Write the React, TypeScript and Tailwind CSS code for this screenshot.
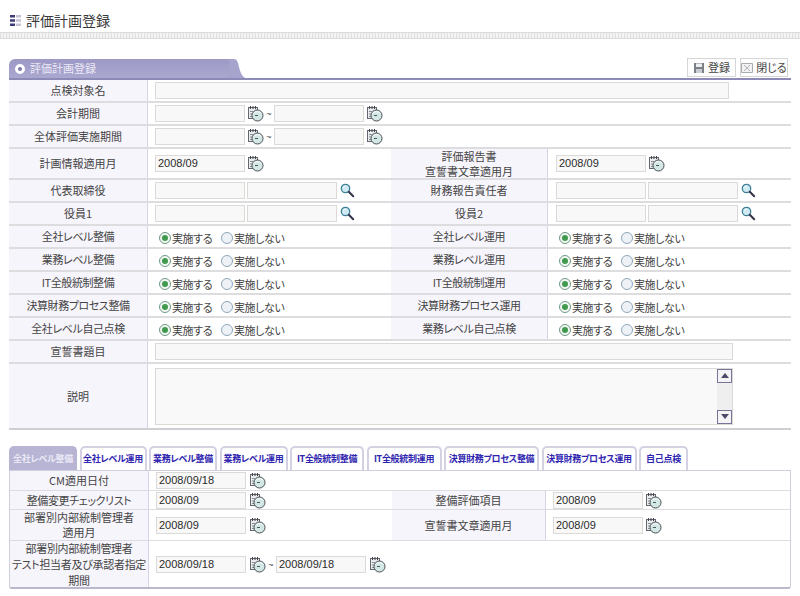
import React from "react";

const Cal = () => (
  <svg width="17" height="17" viewBox="0 0 17 17" className="shrink-0">
    <rect x="1.500" y="2.500" width="9" height="11" fill="#e8ecec" stroke="#66666e" strokeWidth="1" />
    <path d="M3.500 1v3M6 1v3M8.500 1v3" stroke="#44444c" strokeWidth="1" />
    <path d="M3 6.500h3M3 9h2M3 11.500h2" stroke="#8c8c98" strokeWidth="1" />
    <circle cx="10.500" cy="10.500" r="5.500" fill="#d3e8e4" stroke="#4a4e54" strokeWidth="1" />
    <path d="M8 10.500h3" stroke="#4a5a5a" strokeWidth="1" />
    <path d="M6.500 8.500c1.800-2.200 5.500-2.500 7.800-.3" stroke="#fff" strokeWidth="1" fill="none" />
  </svg>
);

const Search = () => (
  <svg width="15" height="15" viewBox="0 0 15 15" className="shrink-0">
    <circle cx="5.500" cy="5.500" r="4.200" fill="#cfeaf2" stroke="#3d7f96" strokeWidth="1.3" />
    <path d="M3.500 4.500c.5-1 1.200-1.400 2.200-1.500" stroke="#fff" strokeWidth="1" fill="none" />
    <path d="M8.800 8.800l4.400 4.400" stroke="#33334a" strokeWidth="2" strokeLinecap="round" />
  </svg>
);

const Input = ({ v = "", w = "w-[90px]" }: { v?: string; w?: string }) => (
  <div className={`${w} h-[17px] shrink-0 bg-[#f8f8f8] border border-[#dcdad6] px-[2px] text-[11px] leading-[15px] text-[#2a2a2a] font-['Liberation_Sans']`}>
    {v}
  </div>
);

const Radio = ({ on }: { on?: boolean }) => (
  <span className={`w-[12px] h-[12px] rounded-full border flex items-center justify-center shrink-0 ${on ? "border-[#6f9a86] bg-[#f2f7f4]" : "border-[#8ea6bb] bg-[#eef2f6]"}`}>
    {on && <span className="w-[6px] h-[6px] rounded-full bg-[#3f9a4f]" />}
  </span>
);

const Radios = () => (
  <div className="flex items-center pl-[11px] pt-[4px] text-[11px] text-[#444] tracking-[-0.4px]">
    <Radio on />
    <span className="ml-[1px] w-[49px]">実施する</span>
    <Radio />
    <span className="ml-[1px]">実施しない</span>
  </div>
);

const Label = ({ children, w, cls = "leading-[15px]" }: { children: React.ReactNode; w: string; cls?: string }) => (
  <div className={`${w} ${cls} shrink-0 h-full flex items-center justify-center text-center text-[11px] text-[#444] bg-[#f7f5fc] border-r border-[#d6d3e4]`}>
    <div>{children}</div>
  </div>
);

const Row = ({ h, children, line = "border-b-2 border-[#dddddf]" }: { h: string; children: React.ReactNode; line?: string }) => (
  <div className={`${h} ${line} box-border flex items-center`}>{children}</div>
);

const Cell = ({ children, cls = "pl-[7px] gap-[2px]" }: { children?: React.ReactNode; cls?: string }) => (
  <div className={`flex items-center ${cls} h-full flex-1 min-w-0`}>{children}</div>
);

const Half = ({ children, w = "w-[244px]" }: { children?: React.ReactNode; w?: string }) => (
  <div className={`flex items-center pl-[7px] gap-[2px] h-full ${w} shrink-0`}>{children}</div>
);

const Tilde = () => <span className="w-[6px] text-center text-[9px] text-[#444] font-['Liberation_Sans'] pt-[3px]">~</span>;

const Pair = () => (
  <>
    <Input />
    <Cal />
    <Tilde />
    <Input />
    <Cal />
  </>
);

const RadioRow = ({ a, b }: { a: string; b: string }) => (
  <Row h="h-[23px]">
    <Label w="w-[139px]" cls="leading-[15px] tracking-[-0.4px]">{a}</Label>
    <div className="w-[243px] h-full shrink-0"><Radios /></div>
    <Label w="w-[157px]" cls="leading-[15px] tracking-[-0.4px]">{b}</Label>
    <div className="flex-1 h-full"><Radios /></div>
  </Row>
);

const tabs: [string, string][] = [
  ["全社レベル整備", "w-[68px]"],
  ["全社レベル運用", "w-[67px]"],
  ["業務レベル整備", "w-[68px]"],
  ["業務レベル運用", "w-[68px]"],
  ["IT全般統制整備", "w-[74px]"],
  ["IT全般統制運用", "w-[75px]"],
  ["決算財務プロセス整備", "w-[95px]"],
  ["決算財務プロセス運用", "w-[95px]"],
  ["自己点検", "w-[49px]"],
];

export default function App() {
  return (
    <div className="w-[800px] h-[596px] overflow-hidden bg-white font-['Noto_Sans_CJK_JP',sans-serif] [font-feature-settings:'palt'] text-[#444]">
      <div className="h-[32px] flex items-center pl-[10px] gap-[5px] pt-[8px]">
        <svg width="11" height="11" viewBox="0 0 11 11">
          <path d="M0 0h5v2.500H0zM0 4.200h5v2.500H0zM0 8.400h5v2.500H0z" fill="#3d3a78" />
          <path d="M6 0h5v2.500H6zM6 4.200h5v2.500H6zM6 8.400h5v2.500H6z" fill="#c4c3d4" />
        </svg>
        <span className="text-[14px] text-[#3a3a3a]">評価計画登録</span>
      </div>
      <div className="h-[7px] border-y border-[#dcdcdc] bg-[repeating-linear-gradient(90deg,#dedede_0px,#dedede_1px,#f4f4f4_1px,#f4f4f4_3px)]" />

      <div className="mx-[9px] mt-[19px]">
        <div className="flex items-end h-[20px] border-b-2 border-[#8e8ab8] box-content">
          <div className="flex items-stretch h-[19px]">
            <div className="w-[220px] rounded-tl-[6px] bg-gradient-to-b from-[#9d99c6] to-[#aaa7cf] flex items-center pl-[6px] gap-[5px] text-[11px] text-[#ebe9f6]">
              <span className="w-[10px] h-[10px] rounded-full bg-[#7c78ae] border-[3px] border-white" />
              評価計画登録
            </div>
            <svg width="16" height="19" viewBox="0 0 16 19">
              <path d="M0 0h5c3 0 4 3 5 8 1 5 3 9 6 11H0z" fill="#a6a3cc" />
            </svg>
          </div>
          <div className="ml-auto flex items-start gap-[4px] mr-[3px] mb-[1px] text-[11px] text-[#444]">
            <div className="w-[49px] h-[19px] border border-[#d6d6d6] bg-[#fdfdfd] flex items-center justify-center gap-[3px]">
              <svg width="12" height="12" viewBox="0 0 12 12">
                <path d="M1 1h10v10H1z" fill="#7c8086" />
                <path d="M3 1.500h6v3.500H3z" fill="#eceef0" />
                <path d="M3 7h6v4H3z" fill="#c9ccd0" />
              </svg>
              登録
            </div>
            <div className="w-[48px] h-[19px] border border-[#d6d6d6] bg-[#fdfdfd] flex items-center justify-center gap-[3px]">
              <svg width="12" height="12" viewBox="0 0 12 12">
                <path d="M.5 1.500h11v9H.5z" fill="#f2f2f2" stroke="#a9adb2" />
                <path d="M3 3l6 6M9 3l-6 6" stroke="#b0b3b8" />
              </svg>
              閉じる
            </div>
          </div>
        </div>

        <Row h="h-[23px]">
          <Label w="w-[139px]">点検対象名</Label>
          <Cell><Input w="w-[574px]" /></Cell>
        </Row>
        <Row h="h-[23px]">
          <Label w="w-[139px]">会計期間</Label>
          <Cell><Pair /></Cell>
        </Row>
        <Row h="h-[23px]">
          <Label w="w-[139px]">全体評価実施期間</Label>
          <Cell><Pair /></Cell>
        </Row>
        <Row h="h-[31px]">
          <Label w="w-[139px]">計画情報適用月</Label>
          <Half w="w-[243px]"><Input v="2008/09" /><Cal /></Half>
          <Label w="w-[157px]"><>評価報告書<br />宣誓書文章適用月</></Label>
          <Cell cls="pl-[8px] gap-[2px]"><Input v="2008/09" /><Cal /></Cell>
        </Row>
        <Row h="h-[23px]">
          <Label w="w-[139px]">代表取締役</Label>
          <Half w="w-[243px]"><Input /><Input /><span className="ml-[1px]"><Search /></span></Half>
          <Label w="w-[157px]">財務報告責任者</Label>
          <Cell cls="pl-[8px] gap-[2px]"><Input /><Input /><span className="ml-[1px]"><Search /></span></Cell>
        </Row>
        <Row h="h-[23px]">
          <Label w="w-[139px]">役員1</Label>
          <Half w="w-[243px]"><Input /><Input /><span className="ml-[1px]"><Search /></span></Half>
          <Label w="w-[157px]">役員2</Label>
          <Cell cls="pl-[8px] gap-[2px]"><Input /><Input /><span className="ml-[1px]"><Search /></span></Cell>
        </Row>
        <RadioRow a="全社レベル整備" b="全社レベル運用" />
        <RadioRow a="業務レベル整備" b="業務レベル運用" />
        <RadioRow a="IT全般統制整備" b="IT全般統制運用" />
        <RadioRow a="決算財務プロセス整備" b="決算財務プロセス運用" />
        <RadioRow a="全社レベル自己点検" b="業務レベル自己点検" />
        <Row h="h-[23px]">
          <Label w="w-[139px]">宣誓書題目</Label>
          <Cell><Input w="w-[578px]" /></Cell>
        </Row>
        <Row h="h-[66px]" line="border-b-2 border-[#cfcfd3]">
          <Label w="w-[139px]">説明</Label>
          <Cell>
            <div className="w-[578px] h-[57px] border border-[#dcdad6] bg-[#f9f9f9] flex justify-end">
              <div className="w-[15px] h-full bg-[#efefef] flex flex-col justify-between">
                <div className="h-[14px] border border-[#77749a] bg-[#f4f4f6] flex items-center justify-center">
                  <span className="w-0 h-0 border-x-[4px] border-x-transparent border-b-[5px] border-b-[#4c4a66]" />
                </div>
                <div className="h-[14px] border border-[#77749a] bg-[#f4f4f6] flex items-center justify-center">
                  <span className="w-0 h-0 border-x-[4px] border-x-transparent border-t-[5px] border-t-[#4c4a66]" />
                </div>
              </div>
            </div>
          </Cell>
        </Row>

        <div className="flex gap-[2.5px] mt-[16px] h-[24px] items-end">
          {tabs.map(([t, w], i) => (
            <div
              key={t}
              className={`${w} h-[24px] shrink-0 rounded-t-[5px] flex items-center justify-center text-[9px] font-bold tracking-[-0.3px] border-2 border-b-0 ${
                i === 0 ? "bg-[#b7b4d4] border-[#b7b4d4] text-[#ebe9f6]" : "bg-white border-[#d3d1e2] text-[#2f25b0]"
              }`}
            >
              {t}
            </div>
          ))}
        </div>
        <div className="border border-[#cfcedd] border-b-2 border-b-[#b9b8cc] rounded-b-[3px] overflow-hidden">
          <Row h="h-[20px]" line="border-b border-[#dcdce2]">
            <Label w="w-[139px]">CM適用日付</Label>
            <Cell><Input v="2008/09/18" /><span className="ml-[1px]"><Cal /></span></Cell>
          </Row>
          <Row h="h-[19px]" line="border-b border-[#dcdce2]">
            <Label w="w-[139px]" cls="leading-[15px] tracking-[-0.4px]">整備変更チェックリスト</Label>
            <Half w="w-[243px]"><Input v="2008/09" /><span className="ml-[1px]"><Cal /></span></Half>
            <Label w="w-[154px]">整備評価項目</Label>
            <Cell><Input v="2008/09" /><Cal /></Cell>
          </Row>
          <Row h="h-[31px]" line="border-b border-[#dcdce2]">
            <Label w="w-[139px]"><>部署別内部統制管理者<br />適用月</></Label>
            <Half w="w-[243px]"><Input v="2008/09" /><span className="ml-[1px]"><Cal /></span></Half>
            <Label w="w-[154px]">宣誓書文章適用月</Label>
            <Cell><Input v="2008/09" /><Cal /></Cell>
          </Row>
          <Row h="h-[46px]" line="">
            <Label w="w-[139px]" cls="leading-[16px] tracking-[-0.3px]"><>部署別内部統制管理者<br />テスト担当者及び承認者指定<br />期間</></Label>
            <Cell>
              <Input v="2008/09/18" />
              <span className="ml-[1px]"><Cal /></span>
              <Tilde />
              <Input v="2008/09/18" />
              <span className="ml-[1px]"><Cal /></span>
            </Cell>
          </Row>
        </div>
      </div>
    </div>
  );
}
